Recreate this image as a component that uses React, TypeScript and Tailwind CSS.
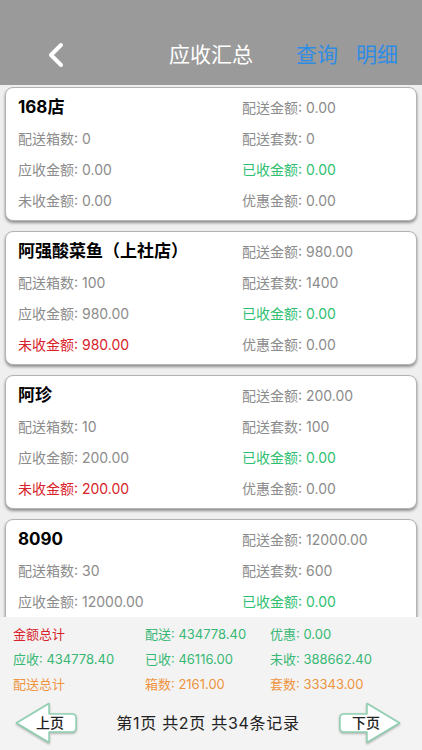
import React from "react";

type Store = {
  name: string;
  peisong: string;
  xiang: string;
  tao: string;
  yingshou: string;
  yishou: string;
  weishou: string;
  youhui: string;
  owes?: boolean;
};

const stores: Store[] = [
  { name: "168店", peisong: "0.00", xiang: "0", tao: "0", yingshou: "0.00", yishou: "0.00", weishou: "0.00", youhui: "0.00" },
  { name: "阿强酸菜鱼（上社店）", peisong: "980.00", xiang: "100", tao: "1400", yingshou: "980.00", yishou: "0.00", weishou: "980.00", youhui: "0.00", owes: true },
  { name: "阿珍", peisong: "200.00", xiang: "10", tao: "100", yingshou: "200.00", yishou: "0.00", weishou: "200.00", youhui: "0.00", owes: true },
  { name: "8090", peisong: "12000.00", xiang: "30", tao: "600", yingshou: "12000.00", yishou: "0.00", weishou: "12000.00", youhui: "0.00", owes: true },
];

const font = { fontFamily: 'Inter, "Noto Sans CJK SC", sans-serif' };

function Row({ left, right }: { left: React.ReactNode; right: React.ReactNode }) {
  return (
    <div className="flex h-[31px] items-center">
      <div className="w-[224px] shrink-0">{left}</div>
      <div>{right}</div>
    </div>
  );
}

function StoreCard({ s }: { s: Store }) {
  return (
    <div className="shrink-0 rounded-[8px] border border-[#b3b3b3] bg-white px-[12px] py-[4px] text-[14px] text-[#8c8c8c] shadow-[0_2px_3px_rgba(0,0,0,0.4)]">
      <Row
        left={<span className="text-[17px] font-bold text-black">{s.name}</span>}
        right={<span>配送金额: {s.peisong}</span>}
      />
      <Row left={<span>配送箱数: {s.xiang}</span>} right={<span>配送套数: {s.tao}</span>} />
      <Row
        left={<span>应收金额: {s.yingshou}</span>}
        right={<span className="text-[#2fbf71]">已收金额: {s.yishou}</span>}
      />
      <Row
        left={<span className={s.owes ? "text-[#d8232a]" : ""}>未收金额: {s.weishou}</span>}
        right={<span>优惠金额: {s.youhui}</span>}
      />
    </div>
  );
}

function ArrowButton({ dir, label }: { dir: "left" | "right"; label: string }) {
  const d =
    dir === "left"
      ? "M1.5 21 L34 1.5 L34 12 L57 12 Q61 12 61 16 L61 26 Q61 30 57 30 L34 30 L34 40.5 Z"
      : "M60.5 21 L28 1.5 L28 12 L5 12 Q1 12 1 16 L1 26 Q1 30 5 30 L28 30 L28 40.5 Z";
  return (
    <div className="relative h-[42px] w-[62px]">
      <svg width="62" height="42" viewBox="0 0 62 42" className="drop-shadow-[0_1px_1px_rgba(0,0,0,0.3)]">
        <path d={d} fill="white" stroke="#8fd0b2" strokeWidth="1.5" strokeLinejoin="round" />
      </svg>
      <span
        className={
          "absolute top-[11px] text-[14px] font-medium leading-[20px] text-[#222] " +
          (dir === "left" ? "left-[21px]" : "left-[13px]")
        }
      >
        {label}
      </span>
    </div>
  );
}

export default function App() {
  return (
    <div className="flex h-[750px] w-[422px] flex-col overflow-hidden bg-[#efefef]" style={font}>
      <div className="grid h-[85px] shrink-0 grid-cols-3 items-end bg-[#9a9a9a] pb-[10px]">
        <div className="flex h-[40px] items-center pl-[47px]">
          <svg width="18" height="26" viewBox="0 0 18 26">
            <polyline points="14,3 4,13 14,23" fill="none" stroke="white" strokeWidth="4" strokeLinecap="round" strokeLinejoin="round" />
          </svg>
        </div>
        <div className="flex h-[40px] items-center justify-center text-[21px] text-white">应收汇总</div>
        <div className="flex h-[40px] items-center justify-end gap-[18px] pr-[24px] text-[21px] text-[#2f8ce4]">
          <span>查询</span>
          <span>明细</span>
        </div>
      </div>

      <div className="flex flex-1 flex-col gap-[10px] overflow-hidden px-[5px] pt-[2px]">
        {stores.map((s) => (
          <StoreCard key={s.name} s={s} />
        ))}
      </div>

      <div className="h-[133px] shrink-0 bg-[#f3f3f3] pt-[4px] text-[13px] leading-[18px]">
        <div className="flex h-[25px] items-center pl-[13px]">
          <span className="w-[132px] text-[#d8232a]">金额总计</span>
          <span className="w-[125px] text-[#37b874]">配送: 434778.40</span>
          <span className="text-[#37b874]">优惠: 0.00</span>
        </div>
        <div className="flex h-[25px] items-center pl-[13px] text-[#37b874]">
          <span className="w-[132px]">应收: 434778.40</span>
          <span className="w-[125px]">已收: 46116.00</span>
          <span>未收: 388662.40</span>
        </div>
        <div className="flex h-[25px] items-center pl-[13px] text-[#ef9340]">
          <span className="w-[132px]">配送总计</span>
          <span className="w-[125px]">箱数: 2161.00</span>
          <span>套数: 33343.00</span>
        </div>
        <div className="flex h-[54px] items-center justify-between pl-[15px] pr-[21px]">
          <ArrowButton dir="left" label="上页" />
          <span className="text-[16px] tracking-[0.7px] text-[#222]">第1页 共2页 共34条记录</span>
          <ArrowButton dir="right" label="下页" />
        </div>
      </div>
    </div>
  );
}
